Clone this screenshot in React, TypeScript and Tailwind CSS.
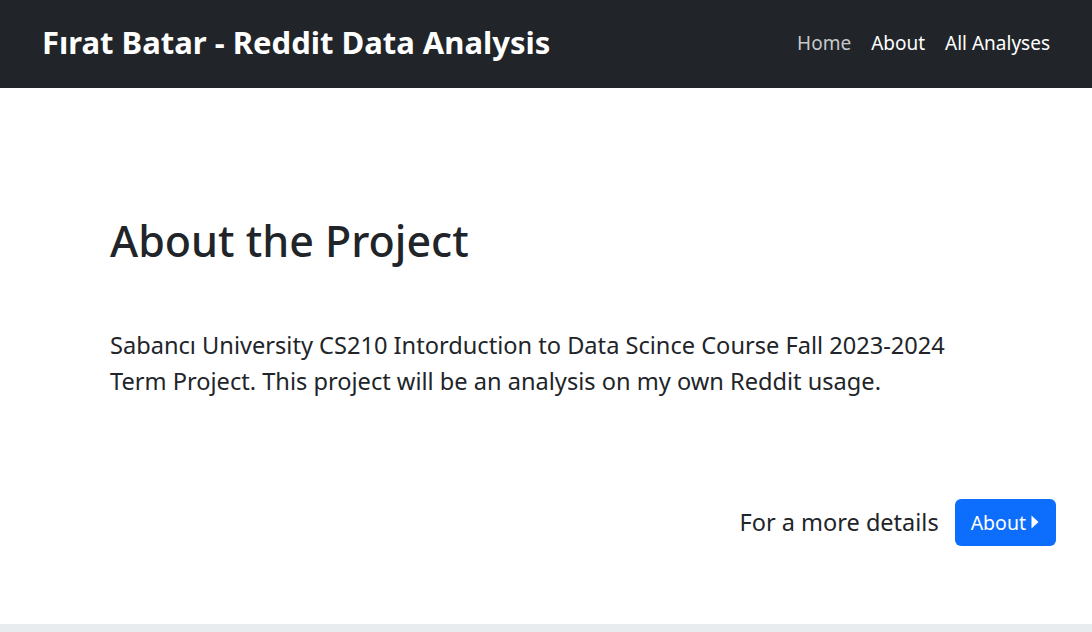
import React from 'react';

const font = { fontFamily: '"Noto Sans", "Open Sans", sans-serif' };

export default function App() {
  return (
    <div className="min-h-screen bg-white flex flex-col text-[#212529]" style={font}>
      <nav className="h-[88px] bg-[#212529] flex items-center justify-between px-[42px]">
        <a className="text-white text-[31px] font-bold leading-none pb-[3px]">Fırat Batar - Reddit Data Analysis</a>
        <div className="flex items-center gap-5 text-[19px] pb-[2px]">
          <a className="text-white/75">Home</a>
          <a className="text-white">About</a>
          <a className="text-white">All Analyses</a>
        </div>
      </nav>

      <main className="flex-1 flex flex-col px-[110px] pt-[126px]">
        <h1 className="text-[43px] font-medium leading-tight">About the Project</h1>
        <p className="mt-[59px] text-[23.6px] leading-[36px] max-w-[870px]">
          Sabancı University CS210 Intorduction to Data Scince Course Fall 2023-2024 Term Project. This project will be an analysis on my own Reddit usage.
        </p>
        <div className="mt-[100px] -mr-[74px] flex items-center justify-end gap-4">
          <span className="text-[23.5px]">For a more details</span>
          <button className="h-[47px] px-4 rounded-md bg-[#0d6efd] text-white text-[19.5px] flex items-center gap-1">
            About
            <svg width="10" height="16" viewBox="0 0 10 16" fill="currentColor">
              <path d="M1.5 1.5 L8.5 8 L1.5 14.5 Z" />
            </svg>
          </button>
        </div>
      </main>

      <div className="h-[8px] bg-[#e9ecef]" />
    </div>
  );
}
